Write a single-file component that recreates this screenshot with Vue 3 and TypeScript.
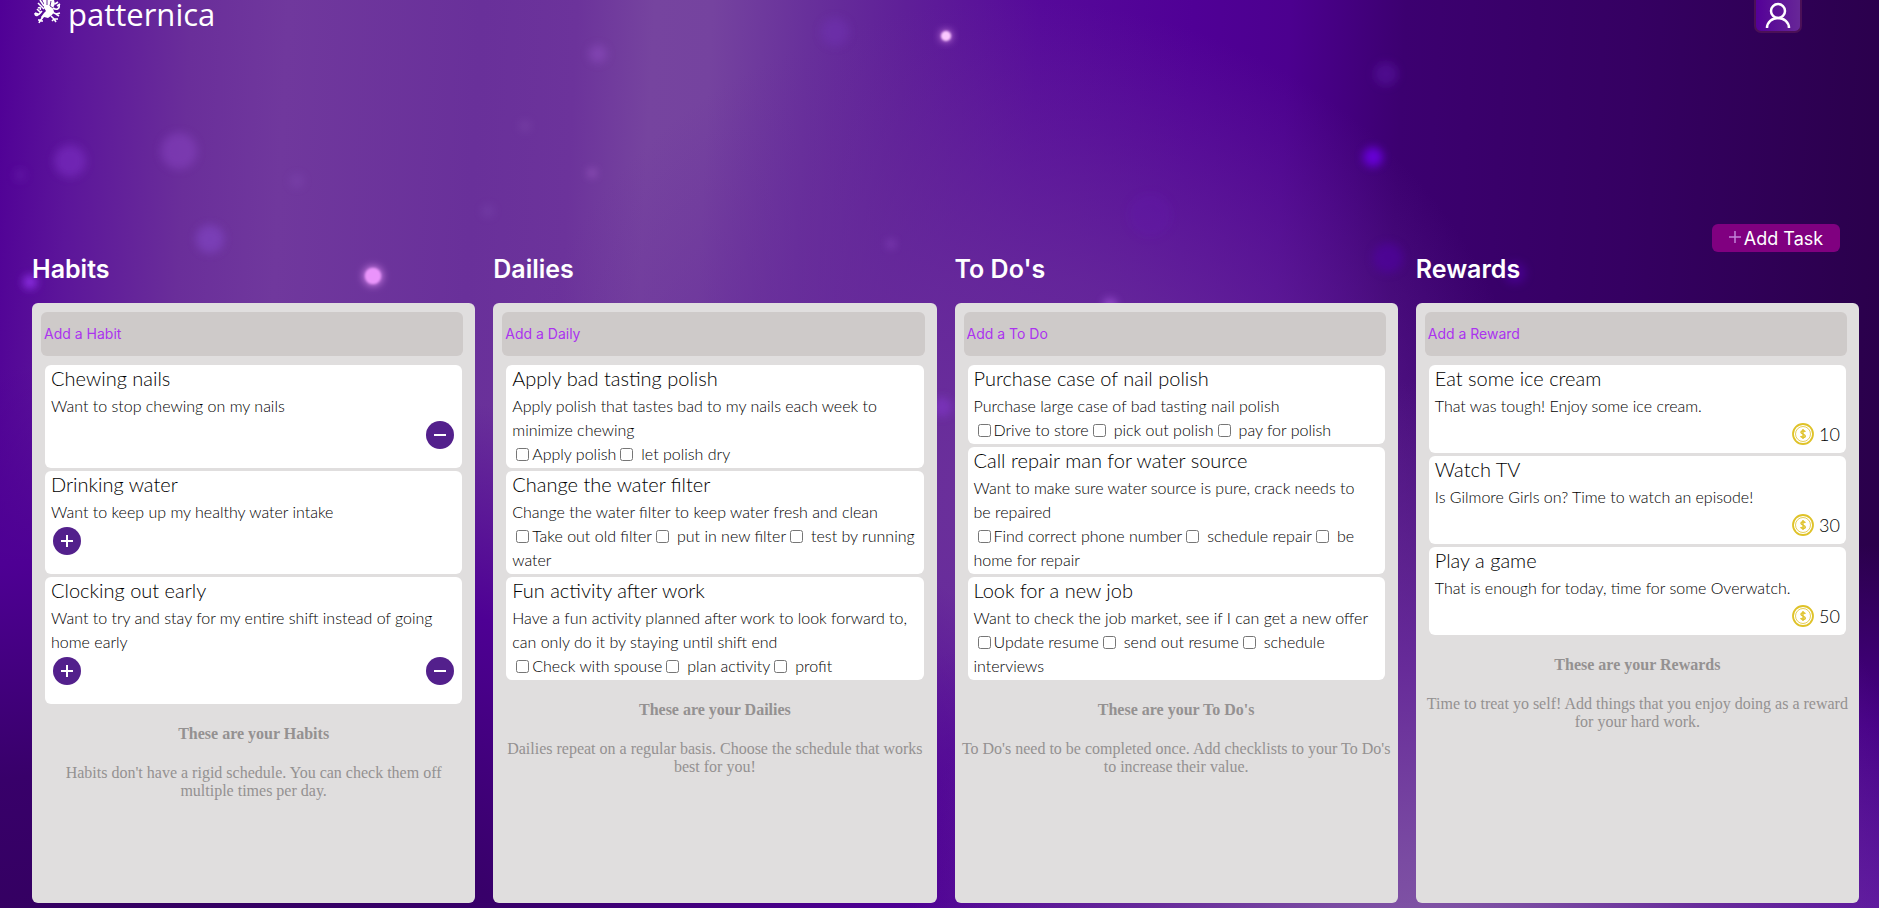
<script setup lang="ts">
interface Task { title: string; text: string; checks?: string[]; plus?: boolean; minus?: boolean; cost?: number }
interface Column { id: string; name: string; add: string; tasks: Task[]; infoTitle: string; info: string }

const columns: Column[] = [
  {
    id: 'habits', name: 'Habits', add: 'Add a Habit', infoTitle: 'These are your Habits',
    info: "Habits don't have a rigid schedule. You can check them off multiple times per day.",
    tasks: [
      { title: 'Chewing nails', text: 'Want to stop chewing on my nails', minus: true },
      { title: 'Drinking water', text: 'Want to keep up my healthy water intake', plus: true },
      { title: 'Clocking out early', text: 'Want to try and stay for my entire shift instead of going home early', plus: true, minus: true },
    ],
  },
  {
    id: 'dailies', name: 'Dailies', add: 'Add a Daily', infoTitle: 'These are your Dailies',
    info: 'Dailies repeat on a regular basis. Choose the schedule that works best for you!',
    tasks: [
      { title: 'Apply bad tasting polish', text: 'Apply polish that tastes bad to my nails each week to minimize chewing', checks: ['Apply polish', 'let polish dry'] },
      { title: 'Change the water filter', text: 'Change the water filter to keep water fresh and clean', checks: ['Take out old filter', 'put in new filter', 'test by running water'] },
      { title: 'Fun activity after work', text: 'Have a fun activity planned after work to look forward to, can only do it by staying until shift end', checks: ['Check with spouse', 'plan activity', 'profit'] },
    ],
  },
  {
    id: 'todos', name: "To Do's", add: 'Add a To Do', infoTitle: "These are your To Do's",
    info: "To Do's need to be completed once. Add checklists to your To Do's to increase their value.",
    tasks: [
      { title: 'Purchase case of nail polish', text: 'Purchase large case of bad tasting nail polish', checks: ['Drive to store', 'pick out polish', 'pay for polish'] },
      { title: 'Call repair man for water source', text: 'Want to make sure water source is pure, crack needs to be repaired', checks: ['Find correct phone number', 'schedule repair', 'be home for repair'] },
      { title: 'Look for a new job', text: 'Want to check the job market, see if I can get a new offer', checks: ['Update resume', 'send out resume', 'schedule interviews'] },
    ],
  },
  {
    id: 'rewards', name: 'Rewards', add: 'Add a Reward', infoTitle: 'These are your Rewards',
    info: 'Time to treat yo self! Add things that you enjoy doing as a reward for your hard work.',
    tasks: [
      { title: 'Eat some ice cream', text: 'That was tough! Enjoy some ice cream.', cost: 10 },
      { title: 'Watch TV', text: 'Is Gilmore Girls on? Time to watch an episode!', cost: 30 },
      { title: 'Play a game', text: 'That is enough for today, time for some Overwatch.', cost: 50 },
    ],
  },
]

const sparks: [number, number, number, string, number][] = [
  [946, 36, 5, '#f7a8ff', 1], [373, 276, 9, '#ea94fb', 1], [30, 282, 7, '#9233ea', 0.9],
  [70, 161, 16, '#7d2fc4', 0.6], [179, 151, 18, '#8a45c4', 0.5], [210, 239, 14, '#8346c8', 0.6],
  [598, 54, 9, '#9250c4', 0.5], [835, 32, 14, '#7132b4', 0.5], [1373, 157, 10, '#6a00e0', 0.9],
  [1386, 74, 12, '#5b12a4', 0.5], [1388, 258, 15, '#5205ac', 0.5], [592, 173, 4, '#a864cf', 0.7],
  [891, 244, 4, '#9550cc', 0.6], [1110, 305, 7, '#a95ae0', 0.7], [525, 126, 6, '#8854b4', 0.3],
  [297, 181, 7, '#8148b4', 0.4], [488, 211, 6, '#7e48b4', 0.4], [1150, 215, 22, '#6418ac', 0.3],
  [942, 407, 10, '#7f36c4', 0.7], [20, 175, 6, '#7026b4', 0.4], [1515, 273, 11, '#5205ac', 0.5],
]
</script>

<template>
  <div class="page">
    <svg class="sparks" aria-hidden="true">
      <defs>
        <filter id="soft" x="-80%" y="-80%" width="260%" height="260%"><feGaussianBlur stdDeviation="4" /></filter>
        <filter id="glow" x="-50%" y="-50%" width="200%" height="200%"><feGaussianBlur stdDeviation="1" /></filter>
      </defs>
      <circle v-for="(s, i) in sparks" :key="i" :cx="s[0]" :cy="s[1]" :r="s[2]" :fill="s[3]" :opacity="s[4]" filter="url(#soft)" />
      <circle cx="373" cy="276" r="8" fill="#ea94fb" filter="url(#glow)" />
      <circle cx="946" cy="36" r="5" fill="#fbc8ff" filter="url(#glow)" />
    </svg>

    <header class="top">
      <a class="brand" href="#">
        <svg class="griffin" viewBox="0 0 27 24" aria-hidden="true">
          <path d="M10 0H20L21 4 19 8 20 12 18 15 14 18 10 17 8 19 7 17 10 13 12 11 10 8Z" fill="#fff" />
          <path d="M6 0 10 6M4 3 10 9M9 0 12 5M8 11C4 16 1 17 1 13M1 13 4 14M3 9 7 13M4 8C6 7 7 8 6 10M9 17 6 21 5 23M6 21 9 21M7 20 4 20M17 16 20 19 22 22M20 19 24 19M20 19 18 21M18 12 22 14 26 13M22 14 25 16M19 8C23 11 26 8 25 5M23 6 26 4M21 4 24 2" fill="none" stroke="#fff" stroke-width="1.600" />
          <path d="M13 0 13 5M17 1 16 6 19 8" fill="none" stroke="#682f98" stroke-width="1" />
        </svg>
        <span>patternica</span>
      </a>
      <button class="user" type="button" aria-label="Account">
        <svg viewBox="0 0 28 28" aria-hidden="true">
          <circle cx="14" cy="9" r="7" /><path d="M3 26a11 10 0 0 1 22 0" />
        </svg>
      </button>
    </header>

    <main>
      <div class="actions">
        <button class="add-task" type="button">
          <svg viewBox="0 0 12 12" aria-hidden="true"><path d="M6 0V12M0 6H12" /></svg>Add Task
        </button>
      </div>

      <div class="board">
        <section v-for="c in columns" :key="c.id">
          <h2>{{ c.name }}</h2>
          <div class="column">
            <input class="add" type="text" :placeholder="c.add" :aria-label="c.add" />
            <div class="cards">
              <article v-for="t in c.tasks" :key="t.title" class="card">
                <h3>{{ t.title }}</h3>
                <p>{{ t.text }}</p>
                <div v-if="t.checks" class="checks">
                  <template v-for="(k, i) in t.checks" :key="k"><input :id="`${c.id}-${t.title}-${i}`" type="checkbox" /><label :for="`${c.id}-${t.title}-${i}`" :class="{ later: i > 0 }">{{ k }}</label></template>
                </div>
                <div v-else-if="t.cost" class="cost">
                  <svg viewBox="0 0 22 22" aria-hidden="true">
                    <circle cx="11" cy="11" r="10" stroke-width="1.800" /><circle cx="11" cy="11" r="7.500" stroke-width="0.800" />
                    <path d="M13.300 8.800C12.500 7.400 8.900 7.400 8.900 9.300S13.300 10.900 13.300 12.900 9.400 14.700 8.600 13.200M11 6V16" stroke-width="1.400" />
                  </svg>
                  <span>{{ t.cost }}</span>
                </div>
                <div v-else class="score">
                  <button v-if="t.plus" type="button" aria-label="Plus"><svg viewBox="0 0 28 28"><path d="M14 8V20M8 14H20" /></svg></button>
                  <button v-if="t.minus" class="minus" type="button" aria-label="Minus"><svg viewBox="0 0 28 28"><path d="M8 14H20" /></svg></button>
                </div>
              </article>
            </div>
            <div class="info">
              <h4>{{ c.infoTitle }}</h4>
              <p>{{ c.info }}</p>
            </div>
          </div>
        </section>
      </div>
    </main>
  </div>
</template>

<style>
body { margin: 0; }
</style>

<style scoped>
* { box-sizing: border-box; }
h2, h3, h4, p { margin: 0; }
.page {
  position: relative;
  min-height: 100vh;
  overflow: hidden;
  padding-bottom: 5px;
  font-family: Inter, "Liberation Sans", sans-serif;
  background:
    radial-gradient(ellipse 28% 70% at 76% 112%, #8860a8 0%, #7a4ba2 25%, rgba(106, 47, 155, 0.9) 55%, rgba(80, 0, 150, 0) 100%),
    radial-gradient(ellipse 62% 78% at 5% 118%, #300058 0%, #38006a 42%, #4e0094 72%, rgba(80, 0, 150, 0) 100%),
    radial-gradient(ellipse 70% 40% at 100% 100%, #5c14a0 0%, rgba(78, 0, 150, 0.8) 50%, rgba(80, 0, 150, 0) 100%),
    radial-gradient(ellipse 28% 55% at 54% 55%, #6c329b 0%, rgba(104, 44, 155, 0.8) 45%, rgba(80, 0, 150, 0) 100%),
    linear-gradient(93deg, #500096 0%, #5c159a 4%, #6a2e9a 10%, #70389d 15%, #69309a 25%, #6c339b 30%, #76449f 34%, #75439f 37%, #68309b 42%, #5f1f98 47%, #56099a 54%, #500096 62%, #4c008f 67%, #3c0070 73%, #350062 85%, #290049 100%);
}
.sparks { position: absolute; inset: 0; width: 100%; height: 100%; }
.top { position: relative; display: flex; justify-content: space-between; align-items: flex-start; height: 34px; padding: 0 77px 0 34px; }
.brand { display: flex; align-items: flex-start; gap: 7px; color: #fff; text-decoration: none; font: 400 31px/28px "Open Sans", sans-serif; }
.griffin { width: 27px; height: 24px; }
.user { width: 48px; height: 33px; padding: 0; border: 2px solid #4b1057; border-top: 0; border-radius: 0 0 7px 7px; background: linear-gradient(90deg, #540098, #672797); }
.user svg { display: block; width: 28px; height: 28px; margin: 0 auto; fill: none; stroke: #fff; stroke-width: 2.5; }
main { position: relative; padding: 190px 20px 0 32px; }
.actions { display: flex; justify-content: flex-end; padding-right: 19px; }
.add-task { display: flex; align-items: center; justify-content: center; gap: 3px; width: 128px; height: 28px; padding: 2px 0 0; border: 0; border-radius: 6px; background: #800080; color: #fff; font: 400 18px/26px Inter, sans-serif; }
.add-task svg { width: 12px; height: 12px; margin-bottom: 5px; fill: none; stroke: #c183d8; stroke-width: 1.5; }
.board { display: grid; grid-template-columns: repeat(4, minmax(0, 1fr)); gap: 18px; }
h2 { height: 51px; color: #fff; font-size: 25px; line-height: 34px; font-weight: 600; }
.column { min-height: 600px; padding: 9px 9px 20px; border-radius: 6px; background: #e0dede; }
.add { display: block; width: calc(100% - 3px); height: 44px; padding: 0 3px 2px; border: 0; border-radius: 6px; background: #cecac9; font: 400 14px/20px Inter, sans-serif; }
.add::placeholder { color: #ab33ef; opacity: 1; }
.cards { display: grid; gap: 3px; margin: 9px 4px 0; font-family: Lato, sans-serif; font-weight: 300; color: #000; }
.card { padding: 0 6px 2px; border-radius: 6px; background: #fff; font-size: 16px; line-height: 24px; }
.card h3 { margin-bottom: 2px; font-size: 20px; line-height: 27px; font-weight: 300; }
.card p { padding-right: 4px; }
.checks input { width: 13px; height: 13px; margin: 0 3px 0 4px; vertical-align: -1px; }
.checks .later { margin-left: 5px; }
.score { display: flex; height: 48px; padding: 3px 2px 0; }
.score button { width: 28px; height: 28px; padding: 0; border: 0; border-radius: 50%; background: #53208c; }
.score .minus { margin-left: auto; }
.score svg { display: block; width: 28px; height: 28px; fill: none; stroke: #fff; stroke-width: 2; }
.cost { display: flex; align-items: center; justify-content: flex-end; gap: 5px; height: 33px; padding-bottom: 2px; font-size: 18px; }
.cost svg { width: 22px; height: 22px; fill: none; stroke: #dfc228; }
.info { margin: 21px -3px 0; color: #949191; font: 16px/18px "Liberation Serif", serif; text-align: center; }
.info h4 { margin-bottom: 21px; font-weight: 700; }
</style>
